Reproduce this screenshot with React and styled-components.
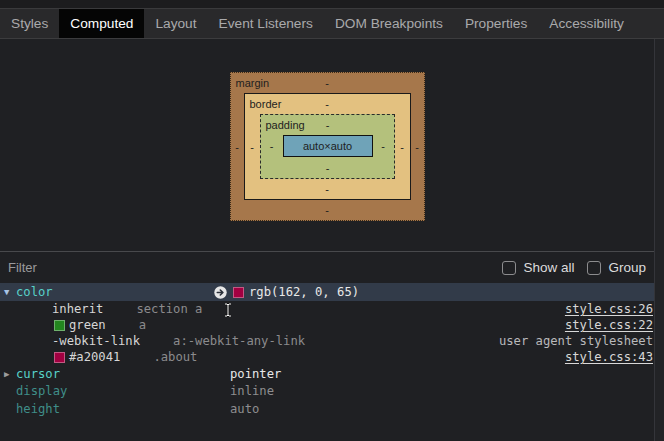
import styled, { createGlobalStyle } from "styled-components";

const GlobalStyle = createGlobalStyle`
  html, body {
    margin: 0;
    padding: 0;
    background: #1f2023;
    overflow: hidden;
  }
  * { box-sizing: border-box; }
`;

const Screen = styled.div`
  width: 664px;
  height: 441px;
  display: flex;
  flex-direction: column;
  background: #1f2023;
  font-family: "Liberation Sans", Arial, sans-serif;
`;

const TopStrip = styled.div`
  height: 9px;
  background: #1c1c1e;
  border-bottom: 1px solid #3a3a3c;
`;

const TabBar = styled.div`
  height: 30px;
  display: flex;
  align-items: stretch;
  background: #29292b;
  border-bottom: 1px solid #3c3c3e;
`;

const Tab = styled.div`
  display: flex;
  align-items: center;
  padding: 0 11px;
  font-size: 13.7px;
  color: ${p => (p.$active ? "#ffffff" : "#a9a9ab")};
  background: ${p => (p.$active ? "#050505" : "transparent")};
`;

const Body = styled.div`
  flex: 1;
  display: flex;
  min-height: 0;
`;

const Main = styled.div`
  flex: 1;
  display: flex;
  flex-direction: column;
`;

const Scrollbar = styled.div`
  width: 10px;
  border-left: 1px solid #34353a;
  background: #222326;
`;

const BoxPanel = styled.div`
  height: 213px;
  display: flex;
  justify-content: center;
  align-items: flex-start;
  padding-top: 33px;
  border-bottom: 1px solid #48494c;
`;

const Layer = styled.div`
  position: relative;
  display: grid;
  grid-template-columns: ${p => p.$side[0]}px auto ${p => p.$side[1]}px;
  grid-template-rows: ${p => p.$side[2]}px auto ${p => p.$side[3]}px;
  background: ${p => p.$bg};
  border: ${p => p.$border};
  font-size: 11px;
  color: #1e1e1e;
`;

const LayerLabel = styled.span`
  position: absolute;
  left: 5px;
  top: 4px;
`;

const Dash = styled.div`
  display: flex;
  align-items: center;
  justify-content: center;
  grid-column: ${p => p.$col};
  grid-row: ${p => p.$row};
`;

const Content = styled.div`
  grid-column: 2;
  grid-row: 2;
  width: 90px;
  height: 22px;
  display: flex;
  align-items: center;
  justify-content: center;
  background: #6fa3b8;
  border: 1px solid #111;
`;

const Center = styled.div`
  grid-column: 2;
  grid-row: 2;
`;

const FilterRow = styled.div`
  height: 31px;
  display: flex;
  align-items: center;
  padding: 0 8px;
  font-size: 13px;
`;

const FilterText = styled.span`
  flex: 1;
  color: #9a9a9c;
`;

const CheckLabel = styled.label`
  display: flex;
  align-items: center;
  gap: 7px;
  margin-left: 13px;
  color: #dcdcdc;
  font-size: 13.5px;
`;

const CheckBox = styled.span`
  width: 14px;
  height: 14px;
  border: 1px solid #8c8c8e;
  border-radius: 3px;
  background: #1f2023;
`;

const List = styled.div`
  position: relative;
  font-family: "DejaVu Sans Mono", "Liberation Mono", monospace;
  font-size: 12.2px;
`;

const PropRow = styled.div`
  height: ${p => (p.$selected ? 18 : 17.5)}px;
  display: grid;
  grid-template-columns: 214px 1fr;
  align-items: center;
  background: ${p => (p.$selected ? "#323b49" : "transparent")};
`;

const NameCell = styled.div`
  display: flex;
  align-items: center;
  height: 100%;
  padding-left: 4px;
  color: ${p => (p.$dim ? "#3f8e89" : "#58d2c9")};
`;

const Toggle = styled.span`
  width: 12px;
  font-size: 9px;
  color: ${p => (p.$open ? "#a8c3e4" : "#9c9c9c")};
`;

const ValueCell = styled.div`
  display: flex;
  align-items: center;
  color: ${p => (p.$dim ? "#8e8e90" : "#e8e8e8")};
`;

const Slot = styled.span`
  width: 16px;
  display: flex;
  align-items: center;
`;

const Swatch = styled.span`
  width: 11px;
  height: 11px;
  margin: ${p => p.$margin};
  background: ${p => p.$color};
  border: 1px solid rgba(255, 255, 255, 0.35);
`;

const TraceRow = styled.div`
  height: 16px;
  display: flex;
  align-items: center;
  padding-left: 52px;
  padding-right: 1px;
  color: #d6d6d6;
`;

const Selector = styled.span`
  margin-left: 33px;
  flex: 1;
  color: #8b8b8d;
`;

const Source = styled.span`
  color: ${p => (p.$link ? "#d8d8d8" : "#b9b9bb")};
  text-decoration: ${p => (p.$link ? "underline" : "none")};
  text-underline-offset: 2px;
`;

const IBeam = styled.svg`
  position: absolute;
  left: 224px;
  top: 20px;
`;

const tabs = ["Styles", "Computed", "Layout", "Event Listeners", "DOM Breakpoints", "Properties", "Accessibility"];

const traces = [
  { value: "inherit", selector: "section a", source: "style.css:26", link: true },
  { value: "green", swatch: "#23871f", selector: "a", source: "style.css:22", link: true },
  { value: "-webkit-link", selector: "a:-webkit-any-link", source: "user agent stylesheet" },
  { value: "#a20041", swatch: "#a20041", selector: ".about", source: "style.css:43", link: true },
];

function Dashes() {
  return (
    <>
      <Dash $col={2} $row={1}>-</Dash>
      <Dash $col={1} $row={2}>-</Dash>
      <Dash $col={3} $row={2}>-</Dash>
      <Dash $col={2} $row={3}>-</Dash>
    </>
  );
}

function GotoIcon() {
  return (
    <svg width="13" height="13" viewBox="0 0 13 13">
      <circle cx="6.5" cy="6.5" r="6.2" fill="#e6e6e6" />
      <path d="M3.3 6.5h5.2M6.3 4l2.6 2.5-2.6 2.5" stroke="#2a2f38" strokeWidth="1.6" fill="none" strokeLinecap="round" strokeLinejoin="round" />
    </svg>
  );
}

export default function App() {
  return (
    <Screen>
      <GlobalStyle />
      <TopStrip />
      <TabBar>
        {tabs.map(t => (
          <Tab key={t} $active={t === "Computed"}>{t}</Tab>
        ))}
      </TabBar>
      <Body>
        <Main>
          <BoxPanel>
            <Layer $side={[13, 13, 20, 20]} $bg="#a6774b" $border="1px dotted #3a2a18">
              <LayerLabel>margin</LayerLabel>
              <Dashes />
              <Center>
                <Layer $side={[15, 15, 20, 20]} $bg="#e3c180" $border="1px solid #1a1a1a">
                  <LayerLabel>border</LayerLabel>
                  <Dashes />
                  <Center>
                    <Layer $side={[22, 21, 20, 21]} $bg="#b4c17c" $border="1px dashed #2a2a2a">
                      <LayerLabel>padding</LayerLabel>
                      <Dashes />
                      <Content>auto×auto</Content>
                    </Layer>
                  </Center>
                </Layer>
              </Center>
            </Layer>
          </BoxPanel>

          <FilterRow>
            <FilterText>Filter</FilterText>
            <CheckLabel><CheckBox />Show all</CheckLabel>
            <CheckLabel><CheckBox />Group</CheckLabel>
          </FilterRow>

          <List>
            <PropRow $selected>
              <NameCell><Toggle $open>▼</Toggle>color</NameCell>
              <ValueCell>
                <Slot><GotoIcon /></Slot>
                <Swatch $color="#a20041" $margin="0 5px 0 3px" />
                rgb(162, 0, 65)
              </ValueCell>
            </PropRow>
            {traces.map(t => (
              <TraceRow key={t.value}>
                {t.swatch && <Swatch $color={t.swatch} $margin="0 4px 0 2px" />}
                {t.value}
                <Selector>{t.selector}</Selector>
                <Source $link={t.link}>{t.source}</Source>
              </TraceRow>
            ))}
            <PropRow>
              <NameCell><Toggle>▶</Toggle>cursor</NameCell>
              <ValueCell><Slot />pointer</ValueCell>
            </PropRow>
            <PropRow>
              <NameCell $dim><Toggle />display</NameCell>
              <ValueCell $dim><Slot />inline</ValueCell>
            </PropRow>
            <PropRow>
              <NameCell $dim><Toggle />height</NameCell>
              <ValueCell $dim><Slot />auto</ValueCell>
            </PropRow>
            <IBeam width="8" height="14" viewBox="0 0 8 14">
              <path d="M1 1h2l1 1 1-1h2M4 2v10M1 13h2l1-1 1 1h2" stroke="#111" strokeWidth="2.4" fill="none" />
              <path d="M1 1h2l1 1 1-1h2M4 2v10M1 13h2l1-1 1 1h2" stroke="#fff" strokeWidth="1" fill="none" />
            </IBeam>
          </List>
        </Main>
        <Scrollbar />
      </Body>
    </Screen>
  );
}
